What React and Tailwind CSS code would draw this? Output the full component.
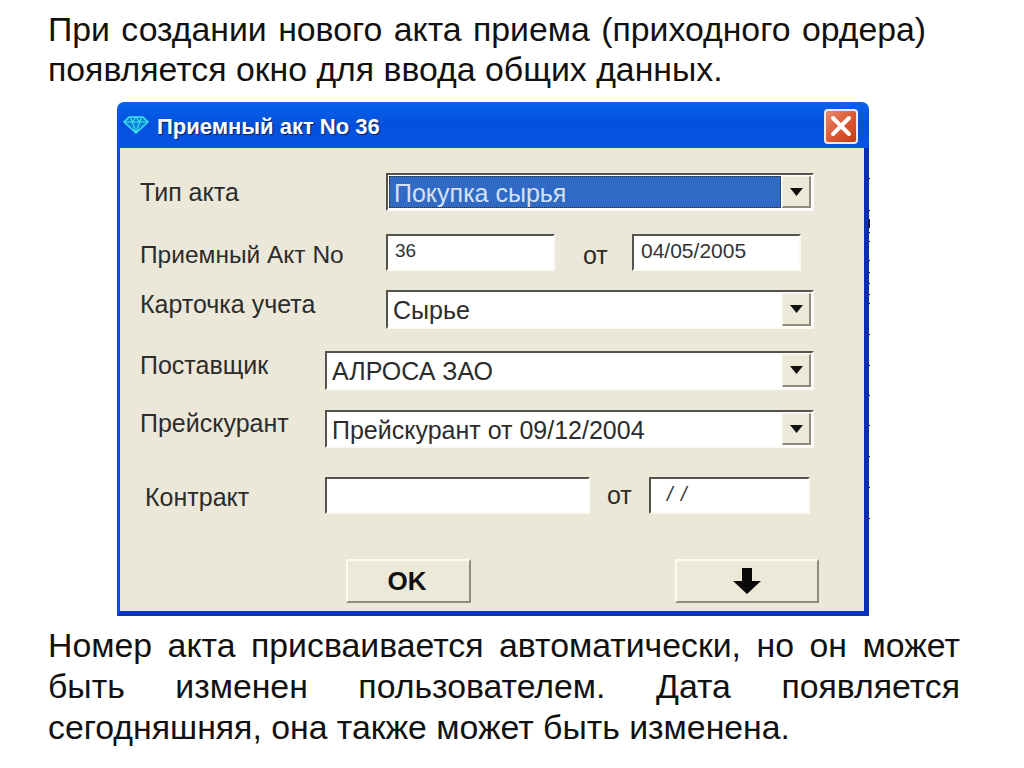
const FONT = "font-['Liberation_Sans',Arial,sans-serif]";
const SUNKEN = "border-2 border-t-[#55534a] border-l-[#55534a] border-r-[#fbfaf5] border-b-[#fbfaf5]";

// dark specks along the right edge of the window, y relative to its top
const TICKS = [76, 108, 117, 118, 119, 120, 121, 122, 123, 124, 125, 130, 139, 158, 170, 181, 192, 201, 232, 263, 293, 323, 354, 385, 416];

function Combo({ text, width, selected }) {
  return (
    <div className={`flex h-full ${width} ${SUNKEN} bg-white`}>
      {selected ? (
        <div className="flex-1 m-[1px] border border-dotted border-[#2b2b2b] bg-[#316ac5] text-[#d5e1f4] text-[25px] leading-[32px] pl-[4px] overflow-hidden">
          {text}
        </div>
      ) : (
        <div className="flex-1 text-[#2c2c2c] text-[25px] leading-[37px] pl-[5px] overflow-hidden whitespace-nowrap">{text}</div>
      )}
      <div className="w-[29px] mt-[1px] mb-[1px] mr-[1px] flex items-center justify-center bg-[#ece9d8] border-r-2 border-b-2 border-r-[#8d8b7d] border-b-[#8d8b7d] border-t border-l border-t-[#f5f4ec] border-l-[#f5f4ec]">
        <svg width="13" height="8" viewBox="0 0 13 8"><path d="M0 0h13L6.500 8z" fill="#111" /></svg>
      </div>
    </div>
  );
}

function Field({ text, width, className }) {
  return (
    <div className={`h-full ${width} ${SUNKEN} bg-white text-[#333] ${className}`}>
      {text}
    </div>
  );
}

function Diamond() {
  return (
    <svg width="26" height="18" viewBox="0 0 26 18" fill="none" stroke="#3fe3f0" strokeWidth="1.500">
      <path d="M6 1h14l5 5-12 11L1 6z" fill="#0f7fd8" />
      <path d="M1 6h24M7 1l2.500 5L13 17l3.500-11L19 1M9.500 6L13 1l3.500 5" strokeWidth="1.100" />
    </svg>
  );
}

function OsButton({ width, children }) {
  return (
    <div className={`${width} h-[44px] flex items-center justify-center bg-[#ece9d8] border-2 border-t-[#fbfaf5] border-l-[#fbfaf5] border-r-[#8d8b7d] border-b-[#8d8b7d]`}>
      {children}
    </div>
  );
}

export default function App() {
  return (
    <div className={`w-[1024px] h-[768px] bg-white text-black overflow-hidden ${FONT}`}>
      <p className="ml-[48px] w-[912px] pt-[9px] text-[33.8px] leading-[40px] text-[#111] first-line:[word-spacing:2px]">
        При создании нового акта приема (приходного ордера) появляется окно для ввода общих данных.
      </p>

      <div className="relative ml-[117px] mt-[13px] w-[752px] h-[514px]">
        <div className="w-full h-full flex flex-col rounded-t-[7px] overflow-hidden">
          {/* title bar */}
          <div className="h-[46px] shrink-0 flex items-center pl-[6px] pr-[11px] bg-gradient-to-b from-[#0a62ea] via-[#0450dc] to-[#0a55e4]">
            <Diamond />
            <span className="ml-[8px] mt-[2px] text-white font-bold text-[22px] [text-shadow:1px_1px_1px_#00206a]">Приемный акт No 36</span>
            <div className="ml-auto mt-[2px] w-[34px] h-[35px] flex items-center justify-center rounded-[4px] border-2 border-[#f0ebe6] bg-gradient-to-br from-[#e88a6c] via-[#dd5a35] to-[#c23a14]">
              <svg width="24" height="24" viewBox="0 0 24 24" stroke="#fff" strokeWidth="4" strokeLinecap="round">
                <path d="M4 4l16 16M20 4L4 20" />
              </svg>
            </div>
          </div>

          {/* form */}
          <div className="flex-1 flex flex-col bg-[#ebe8d9] border-l-[3px] border-r-[5px] border-b-[5px] border-l-[#0a4fd4] border-r-[#0a2fb4] border-b-[#0a35bc] text-[#2c2c2c] text-[25px]">
            <div className="flex items-start h-[38px] mt-[25px] pl-[20px]">
              <span className="w-[246px] mt-[1px] leading-[36px]">Тип акта</span>
              <Combo text="Покупка сырья" width="w-[428px]" selected />
            </div>

            <div className="flex items-start h-[37px] mt-[23px] pl-[20px]">
              <span className="w-[246px] mt-[3px] leading-[36px] text-[24.5px]">Приемный Акт No</span>
              <Field text="36" width="w-[169px]" className="pl-[7px] text-[19px] leading-[30px]" />
              <span className="w-[77px] pl-[28px] mt-[3px] leading-[36px]">от</span>
              <Field text="04/05/2005" width="w-[169px]" className="pl-[7px] text-[21px] leading-[30px]" />
            </div>

            <div className="flex items-start h-[39px] mt-[19px] pl-[20px]">
              <span className="w-[246px] mt-[-4px] leading-[36px]">Карточка учета</span>
              <Combo text="Сырье" width="w-[428px]" />
            </div>

            <div className="flex items-start h-[39px] mt-[22px] pl-[20px]">
              <span className="w-[185px] mt-[-4px] leading-[36px]">Поставщик</span>
              <Combo text="АЛРОСА ЗАО" width="w-[489px]" />
            </div>

            <div className="flex items-start h-[38px] mt-[20px] pl-[20px]">
              <span className="w-[185px] mt-[-5px] leading-[36px]">Прейскурант</span>
              <Combo text="Прейскурант от 09/12/2004" width="w-[489px]" />
            </div>

            <div className="flex items-start h-[37px] mt-[29px] pl-[25px]">
              <span className="w-[180px] mt-[2px] leading-[36px]">Контракт</span>
              <Field text="" width="w-[265px]" />
              <span className="w-[59px] pl-[17px] leading-[36px]">от</span>
              <Field text="/ /" width="w-[161px]" className="pl-[16px] italic text-[20px] leading-[30px] [word-spacing:3px]" />
            </div>

            <div className="flex h-[44px] mt-[45px] pl-[226px]">
              <OsButton width="w-[125px]">
                <span className="font-bold text-[26px] text-[#111] mr-[3px]">OK</span>
              </OsButton>
              <div className="ml-[204px]">
                <OsButton width="w-[144px]">
                  <svg width="30" height="28" viewBox="0 0 30 28"><path d="M10 1h10v13h9L15 27 1 14h9z" fill="#0a0a0a" /></svg>
                </OsButton>
              </div>
            </div>
          </div>
        </div>

        {/* specks overlapping the right border */}
        <svg className="absolute top-0 left-[751px]" width="3" height="514">
          {TICKS.map((y) => (
            <rect key={y} x="0" y={y} width="2" height="1" fill="#1a1a2e" />
          ))}
        </svg>
      </div>

      <p className="ml-[48px] w-[912px] mt-[9px] text-[33.8px] leading-[41px] text-[#111] text-justify">
        Номер акта присваивается автоматически, но он может быть изменен пользователем. Дата появляется сегодняшняя, она также может быть изменена.
      </p>
    </div>
  );
}
